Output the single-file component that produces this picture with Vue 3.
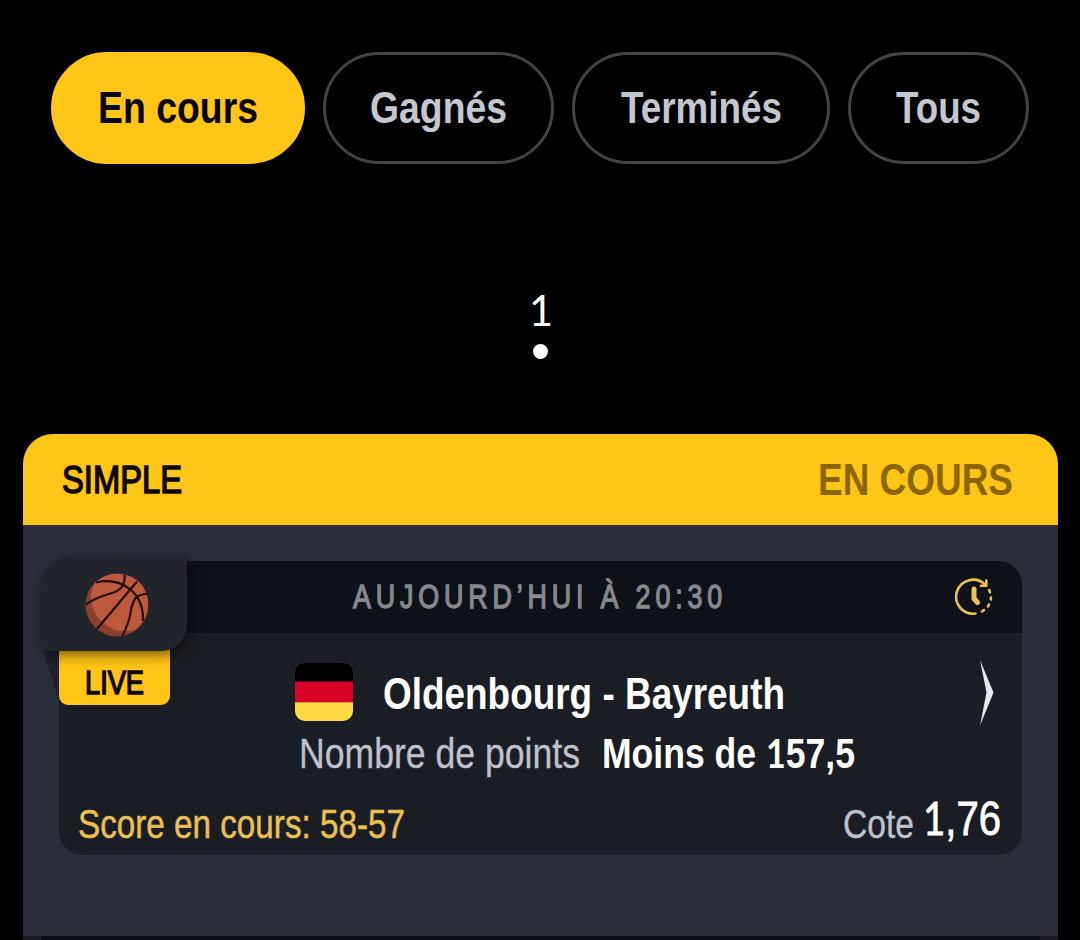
<script setup>
import { h } from 'vue'

const filters = [
  { label: 'En cours', width: 160, active: true, size: 'f1' },
  { label: 'Gagnés', width: 137, size: 'f2' },
  { label: 'Terminés', width: 161, size: 'f3' },
  { label: 'Tous', width: 85, size: 'f4' },
]

// Condensed line of text: the box is as wide as the text and as tall as its capitals.
const Label = (props) => {
  const cap = Math.round(props.size * 0.688)
  return h('svg', { width: props.width, height: cap, class: 'label', 'font-size': props.size }, [
    h(
      'text',
      { x: 0, y: cap, textLength: props.width, lengthAdjust: 'spacingAndGlyphs' },
      props.text.includes('1')
        ? props.text.split(/(1)/).filter(Boolean).map((part) =>
            part === '1' ? h('tspan', { class: 'label-one', 'font-size': props.size * 0.96 }, part) : part
          )
        : props.text
    ),
  ])
}
Label.props = ['text', 'width', 'size']
</script>

<template>
  <main class="screen">
    <nav class="filters">
      <button v-for="f in filters" :key="f.label" class="pill" :class="[f.size, { active: f.active }]">
        <Label :text="f.label" :width="f.width" :size="44.3" />
      </button>
    </nav>

    <div class="pager">
      <Label class="page" text="1" :width="24" :size="45" />
      <i class="dot"></i>
    </div>

    <section class="card">
      <header class="card-head">
        <Label class="kind" text="SIMPLE" :width="120" :size="38.5" />
        <Label class="state" text="EN COURS" :width="195" :size="44.5" />
      </header>

      <article class="bet">
        <div class="bet-head">
          <Label class="date" text="AUJOURD’HUI À 20:30" :width="374" :size="33.5" />
          <svg class="clock" width="40" height="40" viewBox="0 0 40 40">
            <path d="M20.500 36.500 A17 17 0 1 1 30 7.500" />
            <path d="M31.300 3.500 V8.700 H26" />
            <path d="M34.200 13 L35 15.200 M36 20.500 L35.800 22.500 M34 27.500 L33 29.500 M29 33.200 L27 34.500" />
            <path class="hands" d="M19 12 V21.500 L22.500 25.500" />
          </svg>
        </div>

        <div class="match">
          <svg class="flag" width="58" height="58" viewBox="0 0 58 58">
            <rect width="58" height="19" fill="#000" />
            <rect y="18.500" width="58" height="21" fill="#d80027" />
            <rect y="39.300" width="58" height="19" fill="#ffda44" />
          </svg>
          <Label class="teams" text="Oldenbourg - Bayreuth" :width="402" :size="44.5" />
          <svg class="chevron" width="14" height="66" viewBox="0 0 14 66">
            <path d="M0 0 L13.500 32.500 L0 65.500 L6.500 32.500 Z" />
          </svg>
        </div>

        <div class="pick">
          <Label class="market" text="Nombre de points" :width="281" :size="42" />
          <Label class="choice" text="Moins de 157,5" :width="253" :size="42" />
        </div>

        <div class="foot">
          <Label class="score" text="Score en cours: 58-57" :width="327" :size="41" />
          <Label class="odds-name" text="Cote" :width="71" :size="41" />
          <Label class="odds" text="1,76" :width="78" :size="48" />
        </div>

        <svg class="fold" width="16" height="54" viewBox="0 0 16 54"><path d="M0 0 H16 V50 Z" /></svg>
        <div class="live"><Label text="LIVE" :width="59" :size="32.7" /></div>
        <div class="sport">
          <svg width="64" height="64" viewBox="0 0 64 64">
            <circle cx="32" cy="32" r="31.500" fill="#8a402b" />
            <path d="M10 10 C1 25 8 43 21 52 C31 59 43 60 51 56 C65 45 67 25 56 11 C43 -3 22 -2 10 10Z" fill="#bd5a3c" />
            <g class="seams">
              <path d="M11 9.500 C34 4 59 17 58 48" />
              <path d="M39.500 1.500 C40.500 10 37 17 27 20 C15 23.500 8 26 1 31.500" />
              <path d="M52 8.500 L12 56" />
              <path d="M62 21 C52 21 48 26 46 37 C45 46 42 54 37.500 62.500" />
            </g>
          </svg>
        </div>
      </article>

      <div class="next"></div>
    </section>
  </main>
</template>

<style>
body { background: #000; }
.label { display: block; flex: none; overflow: visible; fill: currentColor; stroke: currentColor; stroke-width: 0; }
.label text { white-space: pre; }
.label-one { font-family: Lato, sans-serif; }
</style>

<style scoped>
.screen {
  box-sizing: border-box;
  width: 1080px;
  height: 940px;
  padding: 52px 22px 0 23px;
  overflow: hidden;
  background: #000;
  font-family: "Liberation Sans Narrow", "Liberation Sans", Arial, sans-serif;
}
.filters { display: flex; gap: 18px; padding-left: 28px; }
.pill {
  box-sizing: border-box;
  display: flex;
  align-items: center;
  justify-content: center;
  height: 112px;
  padding: 0;
  border: 3px solid #434346;
  border-radius: 56px;
  background: none;
  color: #c3c7cf;
  font-family: inherit;
  font-weight: 700;
}
.pill.active { border-color: #ffc517; background: #ffc517; color: #080400; }
.f1 { width: 254px; }
.f2 { width: 231px; }
.f3 { width: 258px; }
.f4 { width: 181px; }
.pager { display: flex; flex-direction: column; align-items: center; padding-top: 131px; height: 139px; color: #fff; }
.dot { width: 15px; height: 15px; margin-top: 18px; border-radius: 50%; background: #fff; }
.card { height: 506px; border-radius: 30px 30px 0 0; overflow: hidden; background: #2b2d38; }
.card-head {
  box-sizing: border-box;
  display: flex;
  align-items: center;
  justify-content: space-between;
  height: 91px;
  padding: 0 45px 0 39px;
  background: #ffc517;
}
.kind { color: #0d0700; stroke-width: 1.5px; }
.state { color: #8a6500; font-weight: 700; }
.bet {
  position: relative;
  height: 294px;
  margin: 36px 36px 0;
  border-radius: 24px;
  background: #1b1d24;
}
.bet-head {
  display: flex;
  align-items: center;
  height: 72px;
  border-radius: 24px 24px 0 0;
  background: #0e1118;
}
.date { margin: 0 0 2px 294px; color: #86898e; letter-spacing: 6px; stroke-width: 1.3px; }
.clock { margin-left: 228px; fill: none; stroke: #efc34f; stroke-width: 2.6; stroke-linecap: round; stroke-linejoin: round; }
.clock .hands { stroke-width: 5; }
.match { display: flex; align-items: center; height: 58px; padding: 30px 28px 0 236px; }
.flag { border-radius: 10px; }
.teams { margin: 2px 0 0 30px; color: #fff; font-weight: 700; }
.chevron { margin: 2px 0 0 auto; fill: #e2e9f3; }
.pick { display: flex; padding: 18px 0 0 240px; gap: 22px; }
.market { color: #bfc2cc; stroke-width: 0.3px; }
.choice { color: #fff; font-weight: 700; }
.foot { display: flex; align-items: flex-end; height: 34px; padding: 36px 21px 0 19px; }
.score { color: #eac055; stroke-width: 0.5px; }
.odds-name { margin-left: auto; color: #bfc2cc; stroke-width: 0.4px; }
.odds { margin: 0 0 3px 9px; color: #fff; stroke-width: 0.8px; }
.fold { position: absolute; left: -16px; top: 90px; fill: #1f2128; }
.live {
  position: absolute;
  left: 0;
  top: 80px;
  box-sizing: border-box;
  display: flex;
  justify-content: center;
  width: 111px;
  height: 64px;
  padding-top: 31px;
  border-radius: 0 0 9px 9px;
  background: #ffc517;
  color: #0d0700;
}
.live .label { stroke-width: 1.5px; }
.sport {
  position: absolute;
  left: -16px;
  top: -3px;
  box-sizing: border-box;
  display: flex;
  align-items: center;
  justify-content: center;
  width: 144px;
  height: 93px;
  padding-left: 3px;
  border-radius: 28px 0 26px 0;
  background: #22242c;
  box-shadow: 2px 3px 14px rgba(0, 0, 0, 0.6);
}
.seams { fill: none; stroke: #240c08; stroke-width: 2.2; }
.next { height: 4px; margin-top: 81px; border: solid #1b1c23; border-width: 0 18px; background: #0b0c14; }
</style>
